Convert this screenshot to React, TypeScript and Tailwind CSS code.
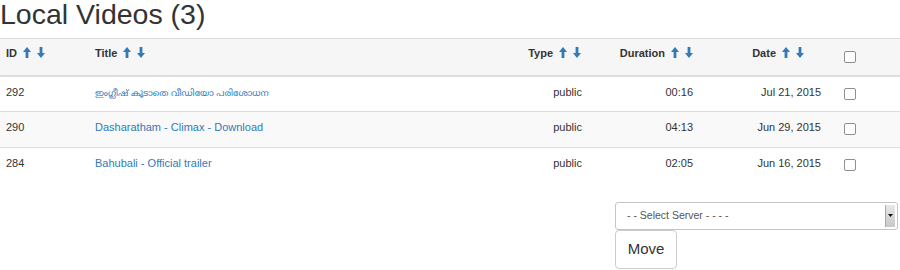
import React from 'react';

const font = { fontFamily: '"Liberation Sans", "Noto Sans Malayalam", "Noto Sans", Arial, sans-serif' };

type Video = { id: number; title: string; type: string; duration: string; date: string };

const videos: Video[] = [
  { id: 292, title: 'ഇംഗ്ലീഷ് കൂടാതെ വീഡിയോ പരിശോധന', type: 'public', duration: '00:16', date: 'Jul 21, 2015' },
  { id: 290, title: 'Dasharatham - Climax - Download', type: 'public', duration: '04:13', date: 'Jun 29, 2015' },
  { id: 284, title: 'Bahubali - Official trailer', type: 'public', duration: '02:05', date: 'Jun 16, 2015' },
];

function SortArrows() {
  return (
    <span className="ml-[6px] inline-flex items-center gap-[6px] align-[-1px]">
      <svg width="8" height="11" viewBox="0 0 8 11">
        <polygon points="4,0 8,5 5.4,5 5.4,11 2.6,11 2.6,5 0,5" fill="#337ab7" />
      </svg>
      <svg width="8" height="11" viewBox="0 0 8 11">
        <polygon points="4,11 8,6 5.4,6 5.4,0 2.6,0 2.6,6 0,6" fill="#337ab7" />
      </svg>
    </span>
  );
}

function Check() {
  return <input type="checkbox" className="block h-[12px] w-[12px] appearance-none rounded-[2px] border border-[#8f8f8f] bg-white" />;
}

export default function App() {
  return (
    <div className="h-[270px] w-[900px] overflow-hidden bg-white text-[#333]" style={font}>
      <h1 className="pt-[1px] text-[28.5px] font-normal leading-[26px] text-[#333]">Local Videos (3)</h1>

      <table className="mt-[11px] w-full table-fixed border-collapse text-[11px] leading-[13px]">
        <colgroup>
          <col className="w-[89px]" />
          <col className="w-[411px]" />
          <col className="w-[90px]" />
          <col className="w-[110px]" />
          <col className="w-[130px]" />
          <col />
        </colgroup>
        <thead>
          <tr className="h-[37px] border-t border-b-2 border-[#dddddd] bg-[#f6f6f6] align-top font-bold">
            <th className="pl-[6px] pt-[8px] text-left">ID<SortArrows /></th>
            <th className="pl-[6px] pt-[8px] text-left">Title<SortArrows /></th>
            <th className="pr-[9px] pt-[8px] text-right">Type<SortArrows /></th>
            <th className="pr-[7px] pt-[8px] text-right">Duration<SortArrows /></th>
            <th className="pr-[26px] pt-[8px] text-right">Date<SortArrows /></th>
            <th className="pl-[14px] pt-[12px] text-left"><Check /></th>
          </tr>
        </thead>
        <tbody>
          {videos.map((v, i) => (
            <tr key={v.id} className={`h-[36px] align-top ${i < videos.length - 1 ? 'border-b border-[#dddddd]' : ''} ${i % 2 === 1 ? 'bg-[#f9f9f9]' : 'bg-white'}`}>
              <td className="pl-[6px] pt-[9px]">{v.id}</td>
              <td className="pl-[6px] pt-[9px]">
                <a href="#" className={`text-[#337ab7] ${i === 0 ? 'text-[9px]' : ''}`}>{v.title}</a>
              </td>
              <td className="pr-[8px] pt-[9px] text-right">{v.type}</td>
              <td className="pr-[7px] pt-[9px] text-right">{v.duration}</td>
              <td className="pr-[9px] pt-[9px] text-right">{v.date}</td>
              <td className="pl-[14px] pt-[11px]"><Check /></td>
            </tr>
          ))}
        </tbody>
      </table>

      <div className="ml-[615px] mt-[18px] flex w-[283px] flex-col items-start">
        <div className="flex h-[28px] w-full items-center rounded-[3px] border border-[#c4c4c4] bg-white pl-[11px] pr-[2px]">
          <span className="flex-1 text-[10.5px] text-[#555]">- - Select Server - - - -</span>
          <span className="flex h-[22px] w-[10px] items-center justify-center border-l border-[#aaa] bg-gradient-to-b from-[#e8e8e8] to-[#c8c8c8]">
            <svg width="5" height="3" viewBox="0 0 5 3">
              <polygon points="0,0 5,0 2.5,3" fill="#111" />
            </svg>
          </span>
        </div>
        <button className="h-[39px] w-[62px] rounded-[4px] border border-[#cccccc] bg-white text-[15px] text-[#333]">Move</button>
      </div>
    </div>
  );
}
